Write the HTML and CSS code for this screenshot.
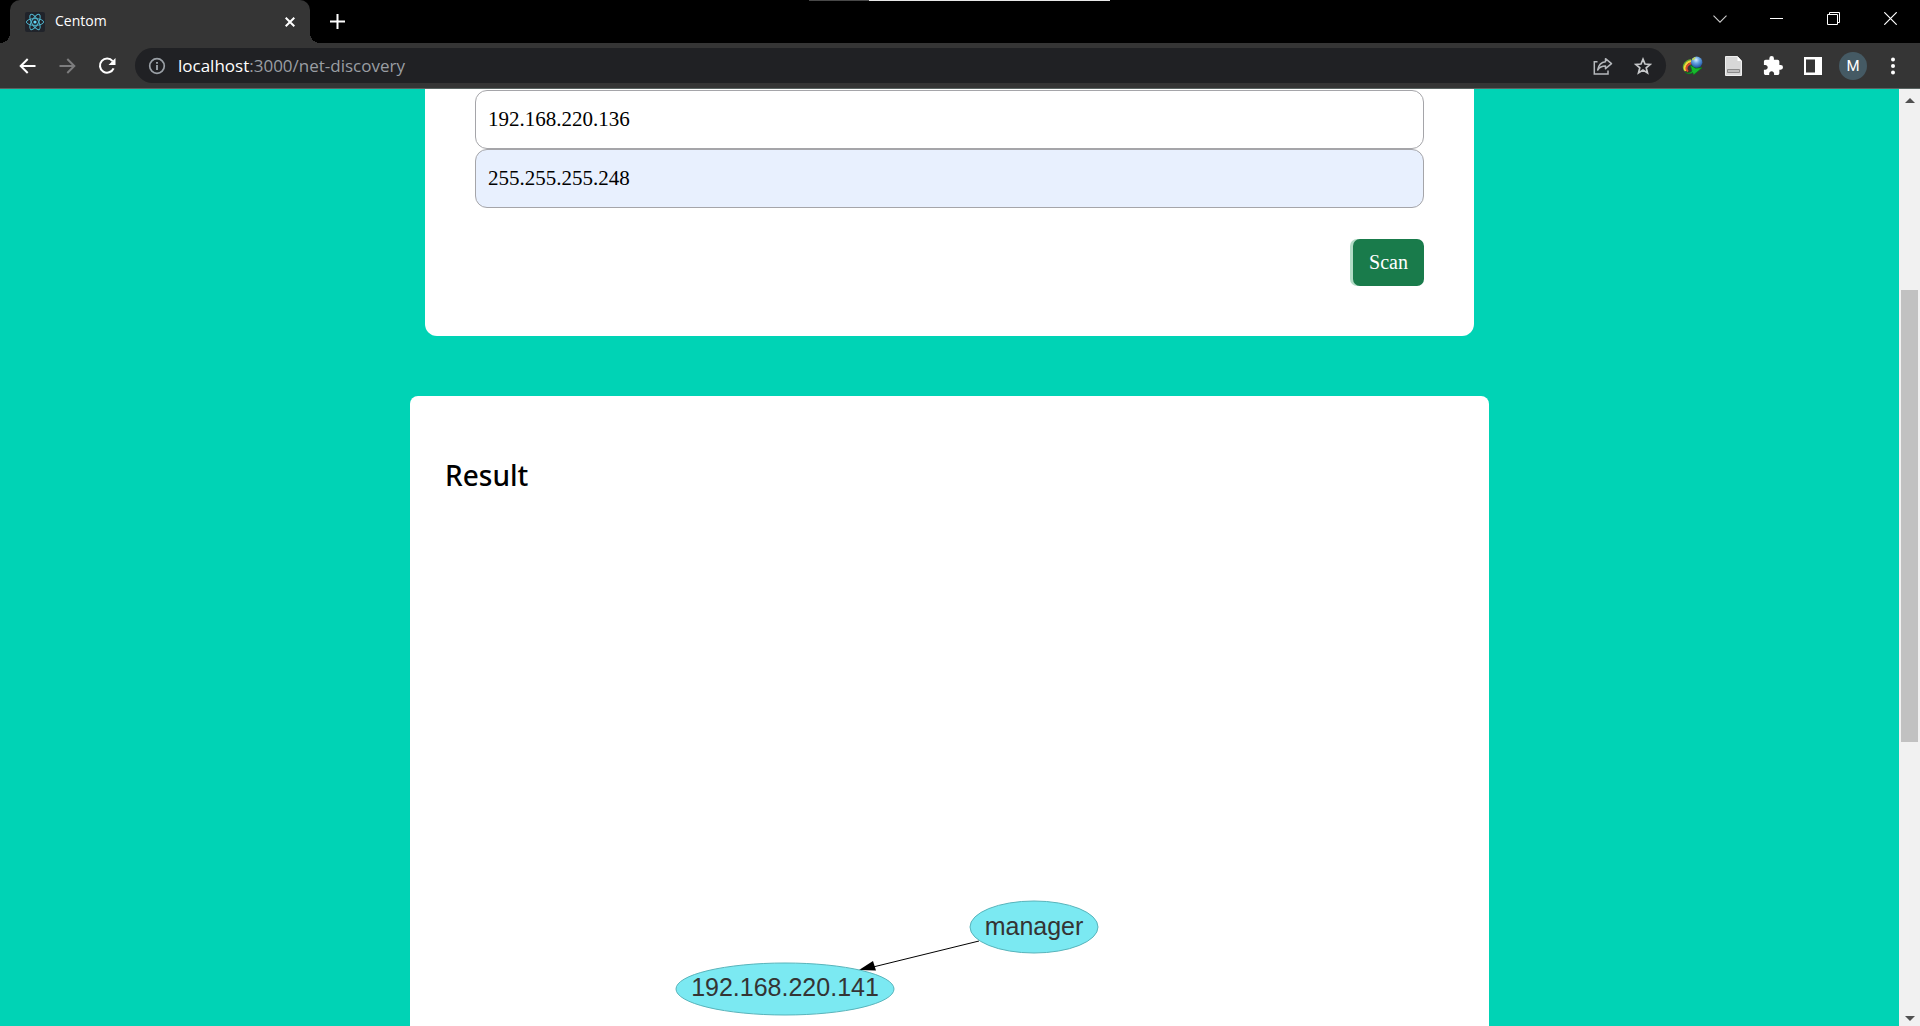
FILE: index.html
```html
<!DOCTYPE html>
<html lang="en">
<head>
  <meta charset="utf-8">
  <title>Centom</title>
  <link rel="stylesheet" href="styles.css">
</head>
<body>
  <div class="window">
    <header class="tabstrip">
      <div class="drag-line"><i class="drag-dim"></i><i class="drag-bright"></i></div>
      <div class="tab">
        <svg class="favicon" width="20" height="20" viewBox="0 0 20 20" fill="none" stroke="#4fb3cb">
          <rect width="20" height="20" rx="2" fill="#20232a" stroke="none"/>
          <ellipse cx="10" cy="10" rx="8.6" ry="3.4"/>
          <ellipse cx="10" cy="10" rx="8.6" ry="3.4" transform="rotate(60 10 10)"/>
          <ellipse cx="10" cy="10" rx="8.6" ry="3.4" transform="rotate(120 10 10)"/>
          <circle cx="10" cy="10" r="1.6" fill="#61dafb" stroke="none"/>
        </svg>
        <span class="tab-title">Centom</span>
        <button class="tab-close" aria-label="Close tab">
          <svg width="10" height="10" viewBox="0 0 10 10" stroke="#fff" stroke-width="2"><path d="M.7.7l8.6 8.6M9.300.7L.7 9.300"/></svg>
        </button>
      </div>
      <button class="new-tab" aria-label="New tab">
        <svg width="15" height="15" viewBox="0 0 15 15" stroke="#fff" stroke-width="2"><path d="M7.500 0v15M0 7.500h15"/></svg>
      </button>
      <div class="window-controls">
        <button aria-label="Search tabs"><svg width="14" height="8" viewBox="0 0 14 8" fill="none" stroke="#ccc" stroke-width="1.100"><path d="M.5.7L7 7.200 13.500.7"/></svg></button>
        <button aria-label="Minimize"><svg width="13" height="13" viewBox="0 0 13 13"><path d="M0 6h13v1H0z" fill="#fff"/></svg></button>
        <button aria-label="Restore"><svg width="13" height="13" viewBox="0 0 13 13" fill="none" stroke="#fff"><path d="M.5 2.500h10v10H.5zM2.500 2.500v-2h10v10h-2"/></svg></button>
        <button aria-label="Close"><svg width="13" height="13" viewBox="0 0 13 13" stroke="#fff" stroke-width="1.200"><path d="M.3.3l12.400 12.400M12.700.3L.3 12.700"/></svg></button>
      </div>
    </header>

    <nav class="toolbar">
      <button class="tool" aria-label="Back">
        <svg width="17" height="16" viewBox="0 0 17 16" fill="none" stroke="#fff" stroke-width="2"><path d="M16.500 8H2M8.700 1L1.700 8l7 7"/></svg>
      </button>
      <button class="tool" aria-label="Forward">
        <svg width="17" height="16" viewBox="0 0 17 16" fill="none" stroke="#7d7d7e" stroke-width="2"><path d="M.5 8H15M8.300 1l7 7-7 7"/></svg>
      </button>
      <button class="tool" aria-label="Reload">
        <svg width="18" height="18" viewBox="0 0 18 18" fill="none"><path d="M14.600 4.100A7.100 7.100 0 1 0 15.600 11.400" stroke="#fff" stroke-width="2.100"/><path d="M17.500 1v7h-7z" fill="#fff"/></svg>
      </button>
      <div class="omnibox">
        <svg class="site-info" width="18" height="18" viewBox="0 0 18 18" fill="none" stroke="#9aa0a6" stroke-width="1.700"><circle cx="9" cy="9" r="7.300"/><path d="M9 8v5M9 5v1.800" stroke-width="1.900"/></svg>
        <span class="url"><b>localhost</b>:3000/net-discovery</span>
        <button class="tool" aria-label="Share">
          <svg width="20" height="18" viewBox="0 0 20 18" fill="none" stroke="#b5b8bc" stroke-width="1.500"><path d="M4.500 4.800H1.300v12.200H15v-3.500"/><path d="M12.500 1.700l6 5-6 5V9C9.300 9 6.500 10 4.700 13 5.500 8.300 8 5.200 12.500 4.800z" stroke-linejoin="round"/></svg>
        </button>
        <button class="tool" aria-label="Bookmark this tab">
          <svg width="18" height="18" viewBox="0 0 18 18" fill="none" stroke="#c6c8ca" stroke-width="1.700"><path d="M9 2.200l2 4.800 5.200.4-4 3.400 1.300 5.100L9 13.100l-4.500 2.800 1.300-5.100-4-3.400L7 7z"/></svg>
        </button>
      </div>
      <button class="tool" aria-label="Download manager">
        <svg width="22" height="20" viewBox="0 0 22 20">
          <defs><radialGradient id="globe" cx=".45" cy=".3" r=".7"><stop offset="0" stop-color="#d9efff"/><stop offset=".4" stop-color="#6ba8e4"/><stop offset="1" stop-color="#1a4f9f"/></radialGradient></defs>
          <path d="M2.500 14.500C-.5 9 4 4.200 9 3.600" fill="none" stroke="#5cad32" stroke-width="1.400"/>
          <path d="M3.800 15C.8 10.500 5 5.600 9.500 5.200" fill="none" stroke="#f2d539" stroke-width="2.200"/>
          <path d="M6 15.500C2.500 12.500 5.500 8 9.500 7.300" fill="none" stroke="#d8452f" stroke-width="1.900"/>
          <circle cx="14.700" cy="6.200" r="5.700" fill="url(#globe)"/>
          <path d="M10 3.200c1-1.300 2.300-2 3.800-2.200l-1 2-2 1.500z" fill="#c3d94c"/>
          <path d="M3 16c3 1.700 5.500.8 7-1L8.300 9l5.200 3.300L20 11.800l-8.300 7-1-2.300C8 18.500 5 18 3 16z" fill="#16b92d" stroke="#087a17" stroke-width=".6"/>
        </svg>
      </button>
      <button class="tool" aria-label="Document extension">
        <svg width="17" height="20" viewBox="0 0 17 20"><path d="M.5.5h12l4 4.500v14.500H.5z" fill="#d8d8d8" stroke="#eee"/><path d="M12.500.5V5h4z" fill="#fff"/><path d="M2.500 13.500h12v3h-12z" fill="#bdbdbd" stroke="#8b8b8b"/></svg>
      </button>
      <button class="tool" aria-label="Extensions">
        <svg width="20" height="20" viewBox="1 1 22 22" fill="#fff"><path d="M20.500 11H19V7c0-1.100-.9-2-2-2h-4V3.500a2.500 2.500 0 0 0-5 0V5H4c-1.100 0-1.990.9-1.990 2v3.800H3.500c1.490 0 2.700 1.210 2.700 2.700s-1.210 2.700-2.700 2.700H2V20c0 1.100.9 2 2 2h3.800v-1.500c0-1.490 1.210-2.700 2.700-2.700s2.700 1.210 2.700 2.700V22H17c1.100 0 2-.9 2-2v-4h1.500a2.500 2.500 0 0 0 0-5z"/></svg>
      </button>
      <button class="tool" aria-label="Side panel">
        <svg width="18" height="18" viewBox="0 0 18 18"><path fill="#fff" fill-rule="evenodd" d="M0 0h18v18H0zM2 2.500v13h9v-13z"/></svg>
      </button>
      <button class="tool" aria-label="Profile"><span class="avatar">M</span></button>
      <button class="tool" aria-label="Menu">
        <svg width="4" height="18" viewBox="0 0 4 18" fill="#fff"><circle cx="2" cy="2.500" r="2"/><circle cx="2" cy="9" r="2"/><circle cx="2" cy="15.500" r="2"/></svg>
      </button>
    </nav>

    <div class="viewport">
      <main class="page">
        <form class="scan-form">
          <input class="field" type="text" aria-label="IP address" value="192.168.220.136">
          <input class="field field-filled" type="text" aria-label="Subnet mask" value="255.255.255.248">
          <button class="scan" type="button">Scan</button>
        </form>
        <section class="result">
          <h2 class="result-title">Result</h2>
          <svg class="graph" viewBox="0 0 1009 560">
            <line x1="534" y1="442" x2="424" y2="469" stroke="#000"/>
            <path d="M414 471l14-9 3 9.500z" fill="#000"/>
            <g class="node">
              <ellipse cx="589" cy="428" rx="64" ry="26"/>
              <text x="589" y="436">manager</text>
            </g>
            <g class="node">
              <ellipse cx="340" cy="490" rx="109" ry="26"/>
              <text x="340" y="497">192.168.220.141</text>
            </g>
          </svg>
        </section>
      </main>
      <div class="scrollbar">
        <svg width="10" height="5" viewBox="0 0 10 5"><path d="M0 5l5-5 5 5z" fill="#505050"/></svg>
        <div class="track"><div class="thumb"></div></div>
        <svg width="10" height="5" viewBox="0 0 10 5"><path d="M0 0l5 5 5-5z" fill="#505050"/></svg>
      </div>
    </div>
  </div>
</body>
</html>
```

FILE: styles.css
```css
* { box-sizing: border-box; }

body { margin: 0; }

button {
  border: 0;
  padding: 0;
  background: none;
}

svg { display: block; flex: none; }

.window {
  display: flex;
  flex-direction: column;
  height: 100vh;
  overflow: hidden;
  font-family: "Noto Sans", "Open Sans", sans-serif;
}

/* Tab strip */
.tabstrip {
  position: relative;
  display: flex;
  flex: none;
  height: 43px;
  padding: 0 1px 0 10px;
  background: #000;
}

.drag-line {
  position: absolute;
  top: 0;
  left: 0;
  right: 2px;
  display: flex;
  justify-content: center;
  height: 1px;
}

.drag-dim { width: 60px; background: #484848; }
.drag-bright { width: 241px; background: #e8e8e8; }

.tab {
  position: relative;
  display: flex;
  align-items: center;
  width: 300px;
  padding: 0 15px;
  border-radius: 10px 10px 0 0;
  background: #353535;
}

.tab::before,
.tab::after {
  content: "";
  position: absolute;
  bottom: 0;
  width: 10px;
  height: 10px;
}

.tab::before {
  right: 100%;
  background: radial-gradient(circle at 0 0, transparent 10px, #353535 10px);
}

.tab::after {
  left: 100%;
  background: radial-gradient(circle at 100% 0, transparent 10px, #353535 10px);
}

.tab-title {
  flex: 1;
  margin: 0 0 2px 10px;
  font-size: 14px;
  line-height: 20px;
  font-family: "Open Sans", sans-serif;
  color: #fff;
}

.new-tab { margin-left: 20px; }

.window-controls {
  display: flex;
  height: 37px;
  margin-left: auto;
}

.window-controls button {
  display: flex;
  align-items: center;
  justify-content: center;
  width: 57px;
}

/* Toolbar */
.toolbar {
  display: flex;
  flex: none;
  align-items: center;
  height: 46px;
  padding: 0 7px;
  border-bottom: 1px solid #5a6462;
  background: #353535;
}

.tool {
  display: flex;
  flex: none;
  align-items: center;
  justify-content: center;
  width: 40px;
  height: 35px;
}

.omnibox {
  display: flex;
  flex: 1;
  align-items: center;
  height: 35px;
  margin: 0 7px 0 8px;
  padding: 0 3px 0 13px;
  border-radius: 18px;
  background: #202124;
}

.url {
  flex: 1;
  margin-left: 12px;
  font-size: 17px;
  line-height: 24px;
  font-family: "Open Sans", sans-serif;
  color: #9a9ea3;
}

.url b { font-weight: 400; color: #fff; }

.avatar {
  width: 28px;
  border-radius: 50%;
  background: #455a64;
  font: 15px/28px Roboto, sans-serif;
  color: #fff;
}

/* Page */
.viewport {
  display: flex;
  flex: 1;
  min-height: 0;
  background: #00d3b5;
}

.page {
  display: flex;
  flex: 1;
  flex-direction: column;
  align-items: center;
  gap: 60px;
  overflow: hidden;
}

.scan-form {
  display: flex;
  flex: none;
  flex-direction: column;
  width: 100%;
  max-width: 1049px;
  padding: 1px 50px 50px;
  border-radius: 0 0 12px 12px;
  background: #fff;
}

.field {
  width: 100%;
  height: 59px;
  padding: 0 12px;
  border: 1px solid #a5a5a9;
  border-radius: 12px;
  background: #fff;
  font: 21px "Liberation Serif", serif;
  color: #000;
}

.field-filled { background: #e8f0fe; }

.scan {
  align-self: flex-end;
  width: 71px;
  height: 47px;
  margin-top: 31px;
  border-radius: 7px;
  background: #197b4b;
  box-shadow: -3px 0 0 #b2dcc6;
  font: 20px "Liberation Serif", serif;
  color: #fff;
}

.result {
  flex: none;
  width: 100%;
  max-width: 1079px;
  padding: 59px 35px;
  border-radius: 8px;
  background: #fff;
}

.result-title {
  margin: 0 0 4px;
  font-size: 28px;
  line-height: 40px;
  font-weight: 500;
  color: #000;
}

.graph { width: 100%; }

.node ellipse { fill: #7be9f2; stroke: #58b4bb; stroke-width: 1px; }

.node text {
  font: 25px "Liberation Sans", sans-serif;
  text-anchor: middle;
  fill: #343434;
}

/* Scrollbar */
.scrollbar {
  display: flex;
  flex: none;
  flex-direction: column;
  align-items: center;
  width: 21px;
  padding: 9px 2px 5px;
  background: #f1f1f1;
}

.track {
  flex: 1;
  width: 100%;
  margin: 7px 0 3px;
}

.thumb {
  height: 50%;
  margin-top: 180px;
  background: #c1c1c1;
}
```
